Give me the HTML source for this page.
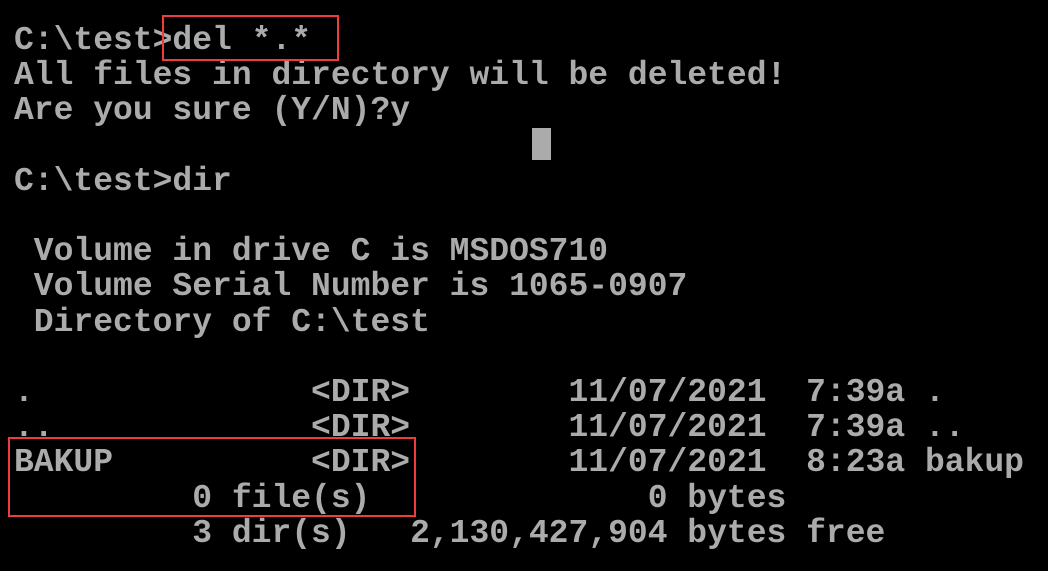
<!DOCTYPE html>
<html><head><meta charset="utf-8"><style>
html,body{margin:0;padding:0;background:#000;width:1048px;height:571px;overflow:hidden;position:relative}
pre{position:absolute;left:14px;top:23px;margin:0;font-family:"Liberation Mono",monospace;font-weight:bold;font-size:33px;line-height:35.2px;color:#ababab;white-space:pre}
.box{position:absolute;border:2px solid #f03c3c;box-sizing:border-box}
.cur{position:absolute;left:532px;top:128px;width:19px;height:32px;background:#ababab}
</style></head><body>
<pre>C:\test&gt;del *.*
All files in directory will be deleted!
Are you sure (Y/N)?y

C:\test&gt;dir

 Volume in drive C is MSDOS710
 Volume Serial Number is 1065-0907
 Directory of C:\test

.              &lt;DIR&gt;        11/07/2021  7:39a .
..             &lt;DIR&gt;        11/07/2021  7:39a ..
BAKUP          &lt;DIR&gt;        11/07/2021  8:23a bakup
         0 file(s)              0 bytes
         3 dir(s)   2,130,427,904 bytes free</pre>
<div class="cur"></div>
<div class="box" style="left:162px;top:15px;width:177px;height:46px"></div>
<div class="box" style="left:8px;top:437px;width:408px;height:80px"></div>
</body></html>
